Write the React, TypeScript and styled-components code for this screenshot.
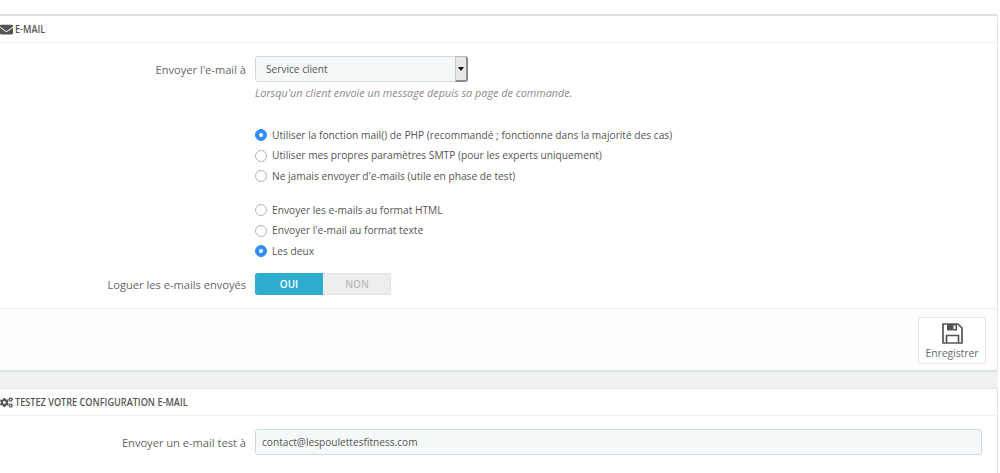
import React from "react";
import styled, { createGlobalStyle } from "styled-components";
import { FaEnvelope, FaCogs } from "react-icons/fa";

const Global = createGlobalStyle`
  html, body { margin: 0; padding: 0; background: #fff; }
  body { width: 1000px; height: 473px; overflow: hidden; font-family: "Open Sans", "Liberation Sans", sans-serif; font-size: 10.5px; color: #555; }
`;

const Page = styled.div`
  display: flex;
  flex-direction: column;
  width: 1000px;
  height: 473px;
  overflow: hidden;
  padding-top: 14px;
  box-sizing: border-box;
`;

const Backdrop = styled.div`
  flex: 1;
  display: flex;
  flex-direction: column;
  gap: 17px;
  width: 998px;
  background: #eff1f2;
  overflow: hidden;
`;

const Panel = styled.section`
  flex: none;
  background: #fff;
  border: 1px solid #e1e4e6;
  border-left: 0;
  border-top: 2px solid #dfe3e5;
  border-radius: 0 3px 3px 0;
  box-shadow: 0 1px 1px rgba(0, 0, 0, 0.08);
`;

const TestPanel = styled(Panel)`
  height: 200px;
  border-top: 1px solid #e1e4e6;
`;

const Heading = styled.header`
  display: flex;
  align-items: center;
  gap: 2px;
  height: 26px;
  border-bottom: 1px solid #eef0f1;
  color: #555;
  svg { color: #555; font-size: 13px; flex: none; }
`;

const HeadingText = styled.span`
  display: inline-block;
  font-size: 11.5px;
  font-weight: 600;
  line-height: 14px;
  margin-top: -1px;
  white-space: nowrap;
  text-transform: uppercase;
  transform: scaleX(0.795);
  transform-origin: left center;
`;

const Body = styled.div`
  display: flex;
  flex-direction: column;
`;

const Row = styled.div<{ $mt?: number }>`
  display: grid;
  grid-template-columns: 246px 1fr;
  column-gap: 9px;
  align-items: center;
  margin-top: ${(p) => p.$mt ?? 0}px;
`;

const Label = styled.label`
  text-align: right;
  font-size: 11.1px;
  color: #666;
`;

const FieldBox = styled.div`
  box-sizing: border-box;
  height: 26px;
  display: flex;
  align-items: center;
  background: #f5f8f9;
  border: 1px solid #cfdbe0;
  border-radius: 3px;
  font-size: 10.15px;
  color: #555;
`;

const SelectBox = styled(FieldBox)`
  width: 213px;
  padding-left: 10px;
  justify-content: space-between;
`;

const Arrow = styled.span`
  box-sizing: border-box;
  width: 13px;
  height: 26px;
  margin-right: -1px;
  display: flex;
  align-items: center;
  justify-content: center;
  background: #e8e8e8;
  border: 1px solid #8c8c8c;
  border-width: 1px 2px 2px 1px;
  border-top-color: #bbb;
  border-left-color: #ccc;
  border-radius: 0 3px 3px 0;
  &::after {
    content: "";
    border-left: 3px solid transparent;
    border-right: 3px solid transparent;
    border-top: 4px solid #111;
  }
`;

const TextBox = styled(FieldBox)`
  width: 727px;
  padding-left: 6px;
`;

const Hint = styled.p`
  margin: 4px 0 0;
  font-size: 10.85px;
  font-style: italic;
  color: #8a8a8a;
  line-height: 14px;
`;

const RadioGroup = styled.div<{ $mt: number }>`
  display: flex;
  flex-direction: column;
  gap: 5.5px;
  margin: ${(p) => p.$mt}px 0 0 255px;
`;

const RadioRow = styled.div`
  display: flex;
  align-items: center;
  gap: 5px;
  height: 15px;
  font-size: 10.2px;
  color: #555;
  white-space: nowrap;
`;

const Dot = styled.span<{ $on?: boolean }>`
  box-sizing: border-box;
  flex: none;
  width: 12px;
  height: 12px;
  margin-top: 1px;
  border-radius: 50%;
  background: ${(p) => (p.$on ? "#2f8cf0" : "#fff")};
  border: 1px solid ${(p) => (p.$on ? "#2f8cf0" : "#b5b5b5")};
  display: flex;
  align-items: center;
  justify-content: center;
  &::after {
    content: "";
    display: ${(p) => (p.$on ? "block" : "none")};
    width: 4px;
    height: 4px;
    border-radius: 50%;
    background: #fff;
  }
`;

const Switch = styled.div`
  display: flex;
  width: 136px;
  height: 22px;
  border-radius: 3px;
  overflow: hidden;
  background: #eeeeee;
  box-shadow: inset 0 0 2px rgba(0, 0, 0, 0.2);
`;

const SwitchOption = styled.span<{ $on?: boolean }>`
  flex: 0 0 50%;
  display: flex;
  align-items: center;
  justify-content: center;
  font-size: 10px;
  font-weight: 600;
  color: ${(p) => (p.$on ? "#fff" : "#bbb")};
  background: ${(p) => (p.$on ? "#2eacce" : "transparent")};
`;

const Footer = styled.footer`
  display: flex;
  justify-content: flex-end;
  margin-top: 13px;
  padding: 8px 11px 6px 0;
  background: #fcfdfe;
  border-top: 1px solid #eef0f1;
`;

const SaveButton = styled.button`
  box-sizing: border-box;
  width: 68px;
  height: 47px;
  display: flex;
  flex-direction: column;
  align-items: center;
  justify-content: center;
  gap: 2px;
  padding: 2px 0 0;
  background: #fff;
  border: 1px solid #e3e6e8;
  border-radius: 3px;
  font: inherit;
  font-size: 10.3px;
  color: #5f6c73;
  svg { display: block; }
`;

const Save = () => (
  <svg width="21" height="21" viewBox="0 0 21 21" fill="none" stroke="#555" strokeWidth="1.7">
    <path d="M1 1h15l4 4v15H1z" />
    <path d="M5 1h10v6.5H5z" fill="#555" stroke="none" />
    <path d="M11.5 2.5h2v3.5h-2z" fill="#fff" stroke="none" />
    <path d="M4.5 20v-7.5h12V20" />
  </svg>
);

export default function App() {
  return (
    <Page>
      <Global />
      <Backdrop>
        <Panel>
          <Heading>
            <FaEnvelope />
            <HeadingText>E-mail</HeadingText>
          </Heading>
          <Body>
            <Row $mt={13}>
              <Label>Envoyer l'e-mail à</Label>
              <SelectBox>
                Service client
                <Arrow />
              </SelectBox>
            </Row>
            <Row>
              <span />
              <Hint>Lorsqu'un client envoie un message depuis sa page de commande.</Hint>
            </Row>
            <RadioGroup $mt={27}>
              <RadioRow><Dot $on />Utiliser la fonction mail() de PHP (recommandé ; fonctionne dans la majorité des cas)</RadioRow>
              <RadioRow><Dot />Utiliser mes propres paramètres SMTP (pour les experts uniquement)</RadioRow>
              <RadioRow><Dot />Ne jamais envoyer d'e-mails (utile en phase de test)</RadioRow>
            </RadioGroup>
            <RadioGroup $mt={19}>
              <RadioRow><Dot />Envoyer les e-mails au format HTML</RadioRow>
              <RadioRow><Dot />Envoyer l'e-mail au format texte</RadioRow>
              <RadioRow><Dot $on />Les deux</RadioRow>
            </RadioGroup>
            <Row $mt={15}>
              <Label>Loguer les e-mails envoyés</Label>
              <Switch>
                <SwitchOption $on>OUI</SwitchOption>
                <SwitchOption>NON</SwitchOption>
              </Switch>
            </Row>
          </Body>
          <Footer>
            <SaveButton>
              <Save />
              Enregistrer
            </SaveButton>
          </Footer>
        </Panel>
        <TestPanel>
          <Heading>
            <FaCogs />
            <HeadingText>Testez votre configuration e-mail</HeadingText>
          </Heading>
          <Body>
            <Row $mt={13}>
              <Label>Envoyer un e-mail test à</Label>
              <TextBox>contact@lespoulettesfitness.com</TextBox>
            </Row>
          </Body>
        </TestPanel>
      </Backdrop>
    </Page>
  );
}
